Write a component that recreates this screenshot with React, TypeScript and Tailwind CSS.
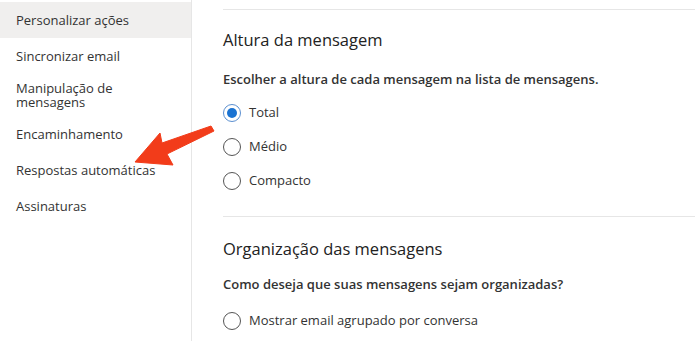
import React from "react";

const navItems = [
  { label: "Personalizar ações", active: true },
  { label: "Sincronizar email" },
  { label: "Manipulação de mensagens", tall: true },
  { label: "Encaminhamento" },
  { label: "Respostas automáticas" },
  { label: "Assinaturas" },
];

function Radio({ checked, label }: { checked?: boolean; label: string }) {
  return (
    <label className="flex h-[34px] items-center gap-2">
      <span
        className={
          checked
            ? "flex h-[18px] w-[18px] items-center justify-center rounded-full border border-[#5b8fd0]"
            : "flex h-[18px] w-[18px] items-center justify-center rounded-full border border-[#555]"
        }
      >
        {checked ? <span className="h-[10px] w-[10px] rounded-full bg-[#1a73d2]" /> : null}
      </span>
      <span className="text-[13px] text-[#333]">{label}</span>
    </label>
  );
}

function Arrow() {
  return (
    <svg className="pointer-events-none absolute left-0 top-0" width="695" height="341">
      <polygon
        points="135,162 160,133 162,143 211,126 214,131 167,154 173,165"
        fill="#f23c1a"
        stroke="#f23c1a"
        strokeWidth="1"
        strokeLinejoin="round"
      />
    </svg>
  );
}

export default function App() {
  return (
    <div
      className="relative flex h-[341px] w-[695px] overflow-hidden bg-white text-[#333]"
      style={{ fontFamily: '"Open Sans", "Noto Sans", sans-serif' }}
    >
      <nav className="w-[192px] shrink-0 border-r border-[#e6e6e6] pt-[2px]">
        {navItems.map((item) => (
          <div
            key={item.label}
            className={[
              "flex items-center pl-4 pr-6 text-[13px] leading-[14px]",
              item.tall ? "h-[42px]" : "h-[36px]",
              item.active ? "bg-[#f0efee]" : "",
            ].join(" ")}
          >
            {item.label}
          </div>
        ))}
      </nav>

      <main className="flex-1 pl-[31px] pt-[9px]">
        <section className="border-t border-[#e6e6e6]">
          <h2 className="mt-[18px] text-[16.5px] leading-[24px] text-[#222]">Altura da mensagem</h2>
          <p className="mt-[18px] text-[13px] font-semibold leading-[18px] text-[#333]">
            Escolher a altura de cada mensagem na lista de mensagens.
          </p>
          <div className="mt-[8px] flex flex-col">
            <Radio checked label="Total" />
            <Radio label="Médio" />
            <Radio label="Compacto" />
          </div>
        </section>

        <section className="mt-[18px] border-t border-[#e6e6e6]">
          <h2 className="mt-[20px] text-[16.5px] leading-[24px] text-[#222]">
            Organização das mensagens
          </h2>
          <p className="mt-[14px] text-[13px] font-semibold leading-[18px] text-[#333]">
            Como deseja que suas mensagens sejam organizadas?
          </p>
          <div className="mt-[11px] flex flex-col">
            <Radio label="Mostrar email agrupado por conversa" />
          </div>
        </section>
      </main>

      <Arrow />
    </div>
  );
}
